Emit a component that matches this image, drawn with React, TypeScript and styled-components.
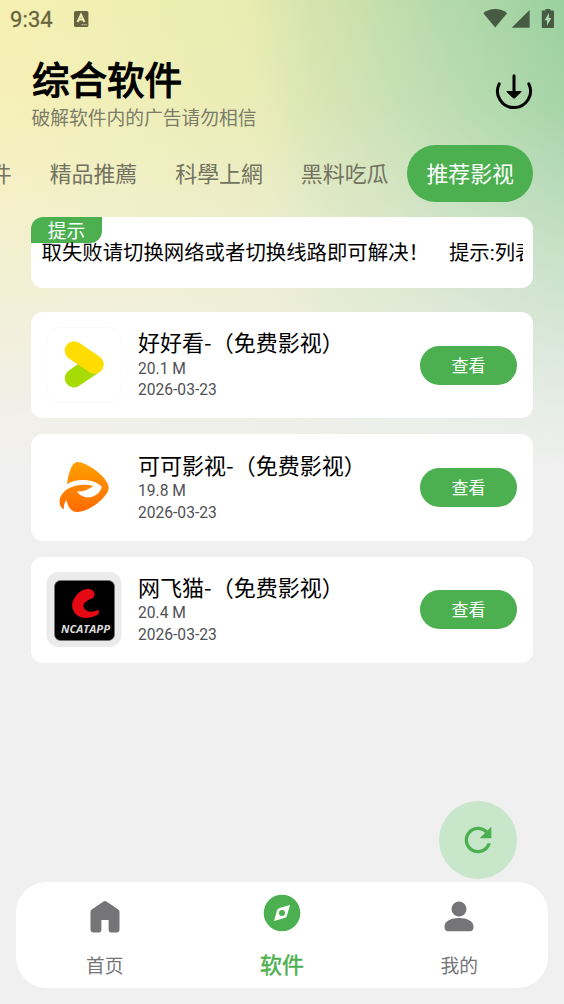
import React from "react";
import styled, { createGlobalStyle } from "styled-components";

const GREEN = "#4caf50";

const GlobalStyle = createGlobalStyle`
  * { box-sizing: border-box; }
  body {
    margin: 0;
    font-family: Roboto, "Noto Sans CJK SC", sans-serif;
    color: #000;
    background: #f0f0f0;
  }
  svg { display: block; flex: none; }
`;

const Screen = styled.div`
  width: 564px;
  height: 1004px;
  overflow: hidden;
  display: flex;
  flex-direction: column;
  background:
    linear-gradient(180deg, rgba(240,240,240,0) 0, rgba(240,240,240,0.1) 100px, rgba(240,240,240,0.35) 200px, rgba(240,240,240,0.6) 300px, rgba(240,240,240,0.85) 400px, #f0f0f0 470px) 0 0 / 100% 480px no-repeat,
    linear-gradient(84deg, #f9f0b2 0%, #f1efb2 25%, #e9ecb0 48%, #d6e4ae 58%, #b8dbab 78%, #9ad09f 100%) 0 0 / 100% 480px no-repeat,
    #f0f0f0;
`;

const StatusBar = styled.header`
  display: flex;
  align-items: center;
  height: 38px;
  padding: 0 10px 0 10px;
`;

const Clock = styled.span`
  width: 64px;
  font-size: 22px;
  line-height: 38px;
  padding-top: 2px;
  font-weight: 400;
  letter-spacing: 0.1px;
  -webkit-text-stroke: 0.3px #66653f;
  color: #66653f;
`;

const StatusIcons = styled.div`
  display: flex;
  margin-left: auto;
`;

const Header = styled.div`
  display: flex;
  justify-content: space-between;
  padding: 18px 31px 0;
  height: 107px;
`;

const Title = styled.h1`
  margin: 0;
  padding-left: 1px;
  font-size: 37.5px;
  line-height: 51px;
  font-weight: 400;
  -webkit-text-stroke: 1.3px #000;
`;

const Subtitle = styled.p`
  margin: 0;
  padding-left: 0.5px;
  font-size: 18.75px;
  line-height: 25px;
  color: #7b7c68;
`;

const DownloadButton = styled.div`
  padding-top: 17px;
`;

const Tabs = styled.nav`
  display: flex;
  justify-content: flex-end;
  padding-right: 31px;
  height: 57px;
`;

const Tab = styled.div<{ $active?: boolean }>`
  flex: none;
  padding: 2px 19px 0;
  font-size: 21.9px;
  line-height: 55px;
  border-radius: 29px;
  white-space: nowrap;
  color: ${(p) => (p.$active ? "#fff" : "#72735f")};
  background: ${(p) => (p.$active ? GREEN : "transparent")};
`;

const Notice = styled.section`
  position: relative;
  height: 71px;
  margin: 15px 31px 0;
  padding: 0 10px 0 10.5px;
  border-radius: 12px;
  background: #fff;
`;

const NoticeTag = styled.span`
  position: absolute;
  left: 0;
  top: 0;
  width: 71px;
  height: 26px;
  border-radius: 12px 0 12px 0;
  background: ${GREEN};
  color: #fff;
  font-size: 18.75px;
  line-height: 30px;
  text-align: center;
`;

const Marquee = styled.div`
  position: relative;
  overflow: hidden;
  white-space: pre;
  font-size: 20.4px;
  line-height: 71px;
  padding-top: 1px;
  height: 71px;
  display: flex;
`;

const MarqueeText = styled.span`
  flex: none;
  margin-right: 20px;
`;

const List = styled.main`
  display: flex;
  flex-direction: column;
  gap: 16px;
  padding: 24px 31px 0;
  flex: 1;
`;

const Card = styled.article`
  display: flex;
  align-items: center;
  height: 106.4px;
  padding: 0 16px 0 15px;
  border-radius: 12px;
  background: #fff;
`;

const CardText = styled.div`
  flex: 1;
  margin-left: 16px;
`;

const Name = styled.div`
  font-family: "Noto Sans CJK SC", sans-serif;
  font-size: 22px;
  line-height: 28px;
  margin: -3px 0 2px;
  white-space: nowrap;
`;

const Meta = styled.div`
  font-size: 15.6px;
  line-height: 21.5px;
  position: relative;
  top: 1.5px;
  color: #505156;
`;

const ViewButton = styled.button`
  width: 97px;
  height: 39px;
  border: 0;
  padding: 1px 0 0;
  border-radius: 20px;
  background: ${GREEN};
  color: #fff;
  font-family: inherit;
  font-size: 17px;
  line-height: 38px;
`;

const Refresh = styled.div`
  align-self: flex-end;
  display: flex;
  align-items: center;
  justify-content: center;
  width: 78px;
  height: 78px;
  margin: 0 47px 2.5px 0;
  border-radius: 50%;
  background: #c8e6c9;
`;

const BottomNav = styled.nav`
  display: flex;
  height: 106.5px;
  margin: 0 16px 16px;
  border-radius: 31px;
  background: #fff;
`;

const NavItem = styled.div<{ $active?: boolean }>`
  flex: 1;
  display: flex;
  flex-direction: column;
  align-items: center;
  justify-content: space-between;
  padding: ${(p) => (p.$active ? "12px 0 8px" : "18px 0 7px")};
  font-size: ${(p) => (p.$active ? "21.9px" : "18.75px")};
  -webkit-text-stroke: ${(p) => (p.$active ? `0.5px ${GREEN}` : "0")};
  line-height: 28px;
  color: ${(p) => (p.$active ? GREEN : "#757578")};
`;

const InputBadge = () => (
  <svg width="15" height="16" viewBox="0 0 15 16">
    <rect width="14.4" height="16" rx="1.6" fill="#66653f" />
    <path d="M3.6 11 L7 3.6 L10.4 11 M4.8 8.6 H9.2" fill="none" stroke="#f0efb4" strokeWidth="2" />
    <path d="M7.5 13.6 H13.4" stroke="#c9c893" strokeWidth="1.2" strokeDasharray="1.2 .8" />
  </svg>
);

const SystemIcons = () => (
  <svg width="72" height="20" viewBox="0 0 72 20" fill="#475b43">
    <path d="M1.3 4.2 C8 -1.3 18.5 -1.3 25.1 4.2 L13.2 18.6 Z" />
    <path d="M47.6 1 V18.8 H29.6 Z" />
    <path d="M63.4 0 h5 v1.6 h2.8 q.8 0 .8.8 v15.8 q0 .8-.8.8 h-10.6 q-.8 0-.8-.8 V2.4 q0-.8.8-.8 h2.8z" />
    <path d="M66.9 4 L62.6 11.2 H65 V16.6 L69.4 9 H66.9 Z" fill="#b0d8b0" />
  </svg>
);

const DownloadIcon = () => (
  <svg width="38" height="37" viewBox="0 0 38 37">
    <path d="M4.2 10.8 A16.5 16.5 0 1 0 33.8 10.8" fill="none" stroke="#000" strokeWidth="3" strokeLinecap="round" />
    <path d="M19 2.7 V20" stroke="#000" strokeWidth="3" strokeLinecap="round" />
    <path d="M11.8 18.5 H26.2 L19.9 24.8 Q19 25.6 18.1 24.8 Z" stroke="#000" strokeWidth="1" strokeLinejoin="round" />
  </svg>
);

const PlayLogo = () => (
  <svg width="76" height="76" viewBox="0 0 76 76">
    <rect x=".5" y=".5" width="75" height="75" rx="12" fill="#fff" stroke="#fafafa" />
    <path d="M28 51.2 L48 37.5" stroke="#a6dc04" strokeWidth="18.5" strokeLinecap="round" />
    <path d="M32.5 37.5 L44.5 46.2 L48 46 Q39 45 36 35Z" fill="#8dc400" opacity=".6" />
    <path d="M28 23.5 L48.5 37.5" stroke="#ffdc00" strokeWidth="18.5" strokeLinecap="round" />
  </svg>
);

const OrangeLogo = () => (
  <svg width="76" height="76" viewBox="0 0 76 76">
    <defs>
      <linearGradient id="orange" x1="0" y1="0" x2="0" y2="1">
        <stop offset="0" stopColor="#ffa000" />
        <stop offset="1" stopColor="#ff6a00" />
      </linearGradient>
    </defs>
    <path
      d="M21.3 33 C22 25 25.5 12.5 31 12 C39 11.5 60 25 62.5 36 Q63 38 62 41 C57 51 43 61 32 62 Q23 62.5 20.5 50 Q17.8 53 17.6 59.5 C11 54.5 12.5 45 22 38.5 Q20.8 37 21.3 33Z"
      fill="url(#orange)"
    />
    <path
      d="M20.5 34.5 C30 28 49 28.5 55.8 37 C54 44 47 48 40 47.3 Q33 45.5 31 41.5 Q39 42 47.5 36 C38 33.5 28 35 19.5 40Z"
      fill="#fff"
    />
  </svg>
);

const CatLogo = () => (
  <svg width="76" height="76" viewBox="0 0 76 76">
    <rect x=".5" y="0" width="75" height="75" rx="12" fill="#ebebeb" />
    <rect x="8.5" y="8.5" width="60" height="60" rx="6" fill="#000" stroke="#777" strokeWidth=".8" />
    <path
      d="M26 33 C27 24 36 16 43 17 C49 18 50 23 47 26 C42 28 37 30 37.5 35 C39 40 46 41 52 38 C54 39 53 42 51 43 C40 49 27 46 26 33Z"
      fill="#e50914"
    />
    <text x="39.5" y="60.8" textAnchor="middle" fontFamily="Open Sans, sans-serif" fontWeight="700" fontStyle="italic" fontSize="10" textLength="49" lengthAdjust="spacingAndGlyphs" fill="#ddd">
      NCATAPP
    </text>
  </svg>
);

const RefreshIcon = () => (
  <svg width="40" height="40" viewBox="0 0 24 24" fill={GREEN}>
    <path d="M17.65 6.35C16.2 4.9 14.21 4 12 4c-4.42 0-7.99 3.58-7.99 8s3.57 8 7.99 8c3.73 0 6.84-2.55 7.73-6h-2.08c-.82 2.33-3.04 4-5.65 4-3.31 0-6-2.69-6-6s2.69-6 6-6c1.66 0 3.14.69 4.22 1.78L13 11h7V4l-2.35 2.35z" />
  </svg>
);

const HomeIcon = () => (
  <svg width="30" height="34" viewBox="0 0 30 34">
    <path
      d="M13.2 1.7 Q15 .3 16.8 1.7 L28.3 9.6 Q29.5 10.5 29.5 12 V29.5 Q29.5 32.5 26.5 32.5 H21 Q18.6 32.5 18.6 30 V20 H11.4 V30 Q11.4 32.5 9 32.5 H3.5 Q.5 32.5 .5 29.5 V12 Q.5 10.5 1.7 9.6Z"
      fill="#757578"
    />
  </svg>
);

const CompassIcon = () => (
  <svg width="38" height="38" viewBox="0 0 38 38">
    <circle cx="19" cy="19" r="18.3" fill={GREEN} />
    <path d="M27 11 L24 21.5 Q23.5 23.5 21.5 24 L11 27 L14 16.5 Q14.5 14.5 16.5 14Z" fill="#fff" />
    <circle cx="19" cy="19" r="3" fill={GREEN} />
  </svg>
);

const PersonIcon = () => (
  <svg width="30" height="34" viewBox="0 0 30 34" fill="#757578">
    <circle cx="15" cy="9" r="7.5" />
    <path d="M.5 26.5 C.5 21 7 18 15 18 S29.5 21 29.5 26.5 Q29.5 31.3 26 31.3 H4 Q.5 31.3 .5 26.5Z" />
  </svg>
);

const apps = [
  { name: "好好看-（免费影视）", size: "20.1 M", date: "2026-03-23", logo: <PlayLogo /> },
  { name: "可可影视-（免费影视）", size: "19.8 M", date: "2026-03-23", logo: <OrangeLogo /> },
  { name: "网飞猫-（免费影视）", size: "20.4 M", date: "2026-03-23", logo: <CatLogo /> },
];

export default function App() {
  return (
    <Screen>
      <GlobalStyle />
      <StatusBar>
        <Clock>9:34</Clock>
        <InputBadge />
        <StatusIcons>
          <SystemIcons />
        </StatusIcons>
      </StatusBar>
      <Header>
        <div>
          <Title>综合软件</Title>
          <Subtitle>破解软件内的广告请勿相信</Subtitle>
        </div>
        <DownloadButton>
          <DownloadIcon />
        </DownloadButton>
      </Header>
      <Tabs>
        <Tab>綜合軟件</Tab>
        <Tab>精品推薦</Tab>
        <Tab>科學上網</Tab>
        <Tab>黑料吃瓜</Tab>
        <Tab $active>推荐影视</Tab>
      </Tabs>
      <Notice>
        <NoticeTag>提示</NoticeTag>
        <Marquee>
          <MarqueeText>取失败请切换网络或者切换线路即可解决！</MarqueeText>
          <MarqueeText>提示:列表</MarqueeText>
        </Marquee>
      </Notice>
      <List>
        {apps.map((app) => (
          <Card key={app.name}>
            {app.logo}
            <CardText>
              <Name>{app.name}</Name>
              <Meta>{app.size}</Meta>
              <Meta>{app.date}</Meta>
            </CardText>
            <ViewButton>查看</ViewButton>
          </Card>
        ))}
      </List>
      <Refresh>
        <RefreshIcon />
      </Refresh>
      <BottomNav>
        <NavItem>
          <HomeIcon />
          首页
        </NavItem>
        <NavItem $active>
          <CompassIcon />
          软件
        </NavItem>
        <NavItem>
          <PersonIcon />
          我的
        </NavItem>
      </BottomNav>
    </Screen>
  );
}
